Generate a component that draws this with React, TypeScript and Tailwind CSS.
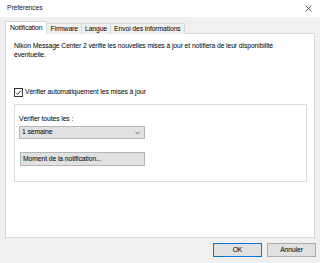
import React from 'react';

const font = { fontFamily: '"Liberation Sans", Arial, sans-serif' };

const tabs = ['Notification', 'Firmware', 'Langue', 'Envoi des informations'];

export default function App() {
  return (
    <div className="w-[320px] h-[263px] bg-[#f0f0f0] flex flex-col text-[6.8px] tracking-[-0.1px] text-[#000] overflow-hidden" style={font}>
      {/* title bar */}
      <div className="h-[17px] shrink-0 bg-white flex items-center justify-between pl-[7px] pr-[8px]">
        <span className="text-[#1a1a1a]">Préférences</span>
        <svg width="7" height="7" viewBox="0 0 7 7">
          <path d="M0.5 0.5L6.5 6.5M6.5 0.5L0.5 6.5" stroke="#333" strokeWidth="0.8" />
        </svg>
      </div>

      {/* tabs */}
      <div className="flex items-end pl-[5px] h-[17px] shrink-0 -mb-px relative z-10">
        {tabs.map((t, i) =>
          i === 0 ? (
            <div key={t} className="h-[13px] px-[4px] bg-white border border-b-0 border-[#d9d9d9] flex items-center">
              {t}
            </div>
          ) : (
            <div key={t} className="h-[11px] px-[3px] bg-[#f0f0f0] border border-l-0 border-b-0 border-[#d9d9d9] flex items-center">
              {t}
            </div>
          )
        )}
      </div>

      {/* panel */}
      <div className="ml-[5px] w-[310px] h-[205px] shrink-0 bg-white border border-[#d9d9d9] pt-[7px] pl-[8px]">
        <p className="leading-[9px] w-[272px]">
          Nikon Message Center 2 vérifie les nouvelles mises à jour et notifiera de leur disponibilité éventuelle.
        </p>

        <label className="flex items-center gap-[2px] mt-[28px] h-[10px]">
          <span className="w-[9px] h-[9px] border border-[#333] bg-white flex items-center justify-center">
            <svg width="7" height="7" viewBox="0 0 7 7">
              <path d="M1 3.6L2.8 5.4L6 1.4" stroke="#222" strokeWidth="0.9" fill="none" />
            </svg>
          </span>
          <span>Vérifier automatiquement les mises à jour</span>
        </label>

        <div className="mt-[7px] w-[293px] h-[78px] border border-[#dcdcdc] pl-[4px] pt-[9px]">
          <div className="leading-[9px]">Vérifier toutes les :</div>
          <div className="mt-[3px] w-[126px] h-[13px] bg-[#e1e1e1] border border-[#b5b5b5] flex items-center justify-between pl-[2px] pr-[4px]">
            <span>1 semaine</span>
            <svg width="5" height="4" viewBox="0 0 5 4">
              <path d="M0.5 1L2.5 3L4.5 1" stroke="#555" strokeWidth="0.8" fill="none" />
            </svg>
          </div>
          <div className="mt-[13px] ml-px w-[125px] h-[14px] bg-[#e1e1e1] border border-[#b5b5b5] flex items-center pl-[2px]">
            Moment de la notification...
          </div>
        </div>
      </div>

      {/* buttons */}
      <div className="flex justify-end gap-[5px] pr-[4px] mt-[5px]">
        <div className="w-[49px] h-[14px] bg-[#e1e1e1] border border-[#0078d7] flex items-center justify-center">OK</div>
        <div className="w-[49px] h-[14px] bg-[#e1e1e1] border border-[#adadad] flex items-center justify-center">Annuler</div>
      </div>
    </div>
  );
}
